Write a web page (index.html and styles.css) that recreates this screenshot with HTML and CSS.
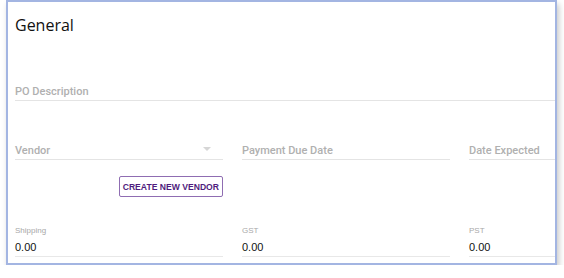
FILE: index.html
```html
<!DOCTYPE html>
<html lang="en">
<head>
    <meta charset="UTF-8">
    <title>General</title>
    <link rel="stylesheet" href="styles.css">
</head>
<body>
    <div class="card">
        <h2 class="card-title">General</h2>

        <div class="field field-wide">
            <span class="placeholder">PO Description</span>
        </div>

        <div class="row">
            <div class="col">
                <div class="field field-select">
                    <span class="placeholder">Vendor</span>
                    <span class="caret"></span>
                </div>
                <div class="btn-row">
                    <button class="outline-btn">CREATE NEW VENDOR</button>
                </div>
            </div>
            <div class="col">
                <div class="field">
                    <span class="placeholder">Payment Due Date</span>
                </div>
            </div>
            <div class="col">
                <div class="field">
                    <span class="placeholder">Date Expected</span>
                </div>
            </div>
        </div>

        <div class="row totals">
            <div class="col">
                <label class="small-label">Shipping</label>
                <div class="value">0.00</div>
            </div>
            <div class="col">
                <label class="small-label">GST</label>
                <div class="value">0.00</div>
            </div>
            <div class="col">
                <label class="small-label">PST</label>
                <div class="value">0.00</div>
            </div>
        </div>
    </div>
</body>
</html>
```

FILE: styles.css
```css
body {
    margin: 0;
    background-color: #fff;
    font-family: "Liberation Sans", Arial, sans-serif;
}
.card {
    box-sizing: border-box;
    width: 551px;
    height: 265px;
    margin-left: 6px;
    padding: 0 0 0 7px;
    border: 2px solid #a3b5e2;
    background-color: #fff;
    box-shadow: 2px 4px 6px rgba(0, 0, 0, 0.22);
    overflow: hidden;
}
.card-title {
    margin: 0;
    padding-top: 12px;
    font-family: "Open Sans", sans-serif;
    font-weight: 400;
    font-size: 16px;
    line-height: 22px;
    color: #111;
}
.field {
    position: relative;
    height: 22px;
    border-bottom: 1px solid #e4e4e4;
}
.field-wide {
    margin-top: 42px;
    width: 700px;
}
.placeholder {
    display: block;
    padding-top: 7px;
    font-family: Roboto, "Liberation Sans", sans-serif;
    font-weight: 500;
    font-size: 11px;
    line-height: 14px;
    color: #b0b0b0;
}
.caret {
    position: absolute;
    right: 12px;
    top: 10px;
    width: 0;
    height: 0;
    border-left: 4px solid transparent;
    border-right: 4px solid transparent;
    border-top: 4px solid #d6d6d6;
}
.row {
    display: grid;
    grid-template-columns: 208px 208px 208px;
    column-gap: 19px;
}
.row:not(.totals) {
    margin-top: 36px;
}
.btn-row {
    display: flex;
    justify-content: flex-end;
    margin-top: 16px;
}
.outline-btn {
    height: 21px;
    padding: 0 3px;
    border: 1px solid #8f6db2;
    border-radius: 2px;
    background-color: #fff;
    color: #4f1c7d;
    font-family: "Liberation Sans", Arial, sans-serif;
    font-weight: 700;
    font-size: 8.6px;
    cursor: pointer;
}
.totals {
    margin-top: 29px;
}
.totals .col {
    border-bottom: 1px solid #e8e8e8;
    height: 30px;
}
.small-label {
    display: block;
    font-size: 8px;
    line-height: 10px;
    color: #a8a8a8;
}
.value {
    margin-top: 5px;
    font-size: 11px;
    line-height: 13px;
    color: #111;
}
```
